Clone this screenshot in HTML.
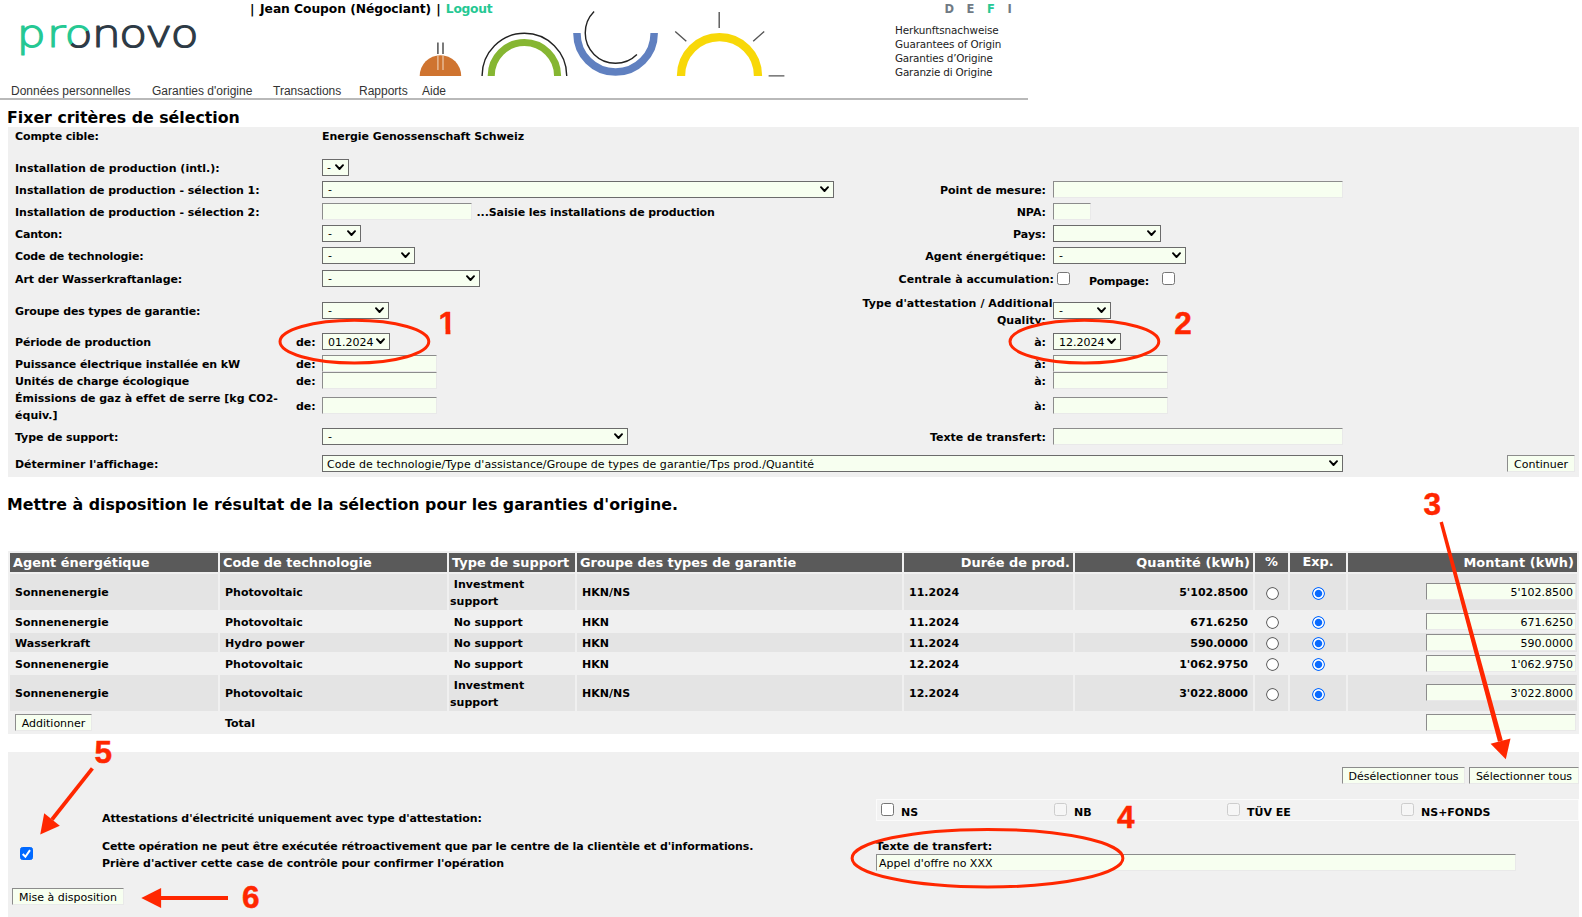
<!DOCTYPE html>
<html lang="fr"><head><meta charset="utf-8"><title>Pronovo</title>
<style>
*{box-sizing:border-box;margin:0;padding:0}
html,body{width:1582px;height:917px;overflow:hidden;background:#fff}
body{position:relative;font-family:"DejaVu Sans","Liberation Sans",sans-serif;font-size:11px;color:#000}
.a{position:absolute;white-space:nowrap;line-height:14px}
.b{font-weight:bold}
.r{text-align:right}
.sel{position:absolute;height:17px;border:1px solid #6b6b6b;background:#f7fff0;font-size:11px;line-height:15px;padding-top:1px;padding-left:5px;white-space:nowrap;overflow:hidden}
.sel svg{position:absolute;right:3.6px;top:4px;width:9px;height:7px}
.inp{position:absolute;height:17px;background:#f7fff0;border:1px solid;border-color:#8c8c8c #e9e9e9 #e9e9e9 #8c8c8c;font-size:11px;line-height:15px;padding-top:1px;white-space:nowrap;overflow:hidden}
.btn{position:absolute;height:17px;background:#f7fff0;border:1px solid;border-color:#8c8c8c #e9e9e9 #e9e9e9 #8c8c8c;font-size:11px;line-height:15px;padding-top:1px;text-align:center;white-space:nowrap}
.cb{position:absolute;width:13px;height:13px;border:1px solid #767676;border-radius:2.5px;background:#fff}
.cb.d{border-color:#cdcdcd;background:#f6f6f6}
.rad{position:absolute;width:13px;height:13px;border-radius:50%;background:radial-gradient(circle at 50% 50%,#fff 0,#fff 4.9px,#666 5.7px,#666 6.1px,rgba(102,102,102,0) 6.9px)}
.rad.on{background:radial-gradient(circle at 50% 50%,#0a6bff 0,#0a6bff 3.2px,#fff 4.2px,#fff 4.9px,#0a6bff 5.6px,#0a6bff 6.1px,rgba(10,107,255,0) 6.9px)}
.menu{font-family:"Liberation Sans",sans-serif;font-size:12px;color:#333}
.cell{position:absolute}
.red{font-family:"Liberation Sans",sans-serif;font-weight:bold;font-size:29px;color:#ff2700;line-height:30px;-webkit-text-stroke:0.5px #ff2700}
</style></head>
<body>
<svg class="cell" style="left:0;top:0" width="260" height="70" viewBox="0 0 260 70"><defs><linearGradient id="lg" gradientUnits="userSpaceOnUse" x1="57.3" y1="24" x2="81.3" y2="48"><stop offset="0.5" stop-color="#25c893"/><stop offset="0.5" stop-color="#2d3a45"/></linearGradient></defs><text transform="scale(1.17,1)" x="14.16 39.89 55.18 78.35 101.76 123.88 145.69" y="47.2" font-family="DejaVu Sans Light, DejaVu Sans, sans-serif" font-weight="200" font-size="39.5" fill="#2d3a45" stroke="#2d3a45" stroke-width="1.2" stroke-linejoin="round"><tspan fill="#25c893" stroke="#25c893">pr</tspan><tspan fill="url(#lg)" stroke="url(#lg)">o</tspan>novo</text></svg>
<div class="a b" style="left:250px;top:1px;font-size:12.3px;line-height:16px">| <span style="margin-left:1.3px;letter-spacing:-0.057px">Jean Coupon (Négociant)</span><span style="margin-left:0.8px"> |</span> <span style="color:#25c893;margin-left:0.9px;letter-spacing:-0.27px">Logout</span></div>
<div class="a b" style="left:944.6px;top:1px;font-size:11.5px;color:#707a84;line-height:16px">D</div>
<div class="a b" style="left:966.6px;top:1px;font-size:11.5px;color:#707a84;line-height:16px">E</div>
<div class="a b" style="left:987px;top:1px;font-size:11.5px;color:#25c893;line-height:16px">F</div>
<div class="a b" style="left:1007.6px;top:1px;font-size:11.5px;color:#707a84;line-height:16px">I</div>
<div class="a " style="left:895px;top:23px;font-size:10.4px;color:#222;letter-spacing:-0.081px;">Herkunftsnachweise</div>
<div class="a " style="left:895px;top:37px;font-size:10.4px;color:#222;letter-spacing:-0.117px;">Guarantees of Origin</div>
<div class="a " style="left:895px;top:51px;font-size:10.4px;color:#222;letter-spacing:-0.196px;">Garanties d’Origine</div>
<div class="a " style="left:895px;top:65px;font-size:10.4px;color:#222;letter-spacing:-0.156px;">Garanzie di Origine</div>
<svg class="cell" style="left:410px;top:0" width="390" height="90" viewBox="410 0 390 90">
<path d="M419.7 76 A20.75 20.75 0 0 1 461.2 76 Z" fill="#cf7430"/>
<path d="M437.9 42.5 V54 M443 42.5 V54" stroke="#444" stroke-width="1.4" fill="none"/>
<path d="M437.9 55.5 V70 M443 55.5 V70" stroke="#ecc3a3" stroke-width="1.3" fill="none"/>
<path d="M482.1 76 V75.6 A42.3 42.3 0 0 1 566.7 75.6 V76" fill="none" stroke="#222" stroke-width="1.4"/>
<path d="M491.25 76 V75.6 A33.15 33.15 0 0 1 557.55 75.6 V76" fill="none" stroke="#86b632" stroke-width="7.1"/>
<path d="M576.95 32.9 V33.5 A38.6 38.6 0 0 0 654.15 33.5 V32.9" fill="none" stroke="#6080c0" stroke-width="7.5"/>
<path d="M594.1 11.6 A30.3 30.3 0 0 0 594.1 54.4 A30.3 30.3 0 0 0 636.9 54.4" fill="none" stroke="#222" stroke-width="1.4"/>
<path d="M681.05 76 V75.5 A38.45 38.45 0 0 1 757.95 75.5 V76" fill="none" stroke="#f8d808" stroke-width="8.3"/>
<path d="M719.2 12 V28 M675.2 31.5 L686.3 41.2 M764.2 31.5 L753.2 41.2 M768.6 75.9 H784.4" stroke="#555" stroke-width="1.4" fill="none"/>
</svg>
<div class="a menu" style="left:11px;top:84px;">Données personnelles</div>
<div class="a menu" style="left:152px;top:84px;">Garanties d'origine</div>
<div class="a menu" style="left:273px;top:84px;">Transactions</div>
<div class="a menu" style="left:359px;top:84px;">Rapports</div>
<div class="a menu" style="left:422px;top:84px;">Aide</div>
<div class="cell" style="left:0px;top:98px;width:1028px;height:2px;background:#b9b9b9;"></div>
<div class="a b" style="left:7px;top:108px;font-size:15.8px;line-height:20px">Fixer critères de sélection</div>
<div class="cell" style="left:8px;top:127px;width:1571px;height:350px;background:#f0f0f0;"></div>
<div class="a b" style="left:15px;top:130px;;letter-spacing:-0.116px;">Compte cible:</div>
<div class="a b" style="left:322px;top:130px;;letter-spacing:-0.057px;">Energie Genossenschaft Schweiz</div>
<div class="a b" style="left:15px;top:162px;;letter-spacing:0.019px;">Installation de production (intl.):</div>
<div class="sel" style="left:322px;top:159px;width:27px;padding-left:4px"><span style="position:relative;top:-1px">-</span><svg viewBox="0 0 9 7"><path d="M1 1.2 L4.5 5 L8 1.2" fill="none" stroke="#000" stroke-width="1.9" stroke-linecap="round" stroke-linejoin="round"/></svg></div>
<div class="a b" style="left:15px;top:184px;;letter-spacing:-0.017px;">Installation de production - sélection 1:</div>
<div class="sel" style="left:322px;top:181px;width:512px;"><span style="position:relative;top:-1px">-</span><svg viewBox="0 0 9 7"><path d="M1 1.2 L4.5 5 L8 1.2" fill="none" stroke="#000" stroke-width="1.9" stroke-linecap="round" stroke-linejoin="round"/></svg></div>
<div class="a r b" style="right:536px;top:184px;">Point de mesure:</div>
<div class="inp" style="left:1053px;top:181px;width:290px;"></div>
<div class="a b" style="left:15px;top:206px;;letter-spacing:-0.017px;">Installation de production - sélection 2:</div>
<div class="inp" style="left:322px;top:203px;width:150px;"></div>
<div class="a b" style="left:476.5px;top:206px;;letter-spacing:-0.093px;">...Saisie les installations de production</div>
<div class="a r b" style="right:536px;top:206px;">NPA:</div>
<div class="inp" style="left:1053px;top:203px;width:38px;"></div>
<div class="a b" style="left:15px;top:228px;;letter-spacing:-0.154px;">Canton:</div>
<div class="sel" style="left:322px;top:225px;width:39px;"><span style="position:relative;top:-1px">-</span><svg viewBox="0 0 9 7"><path d="M1 1.2 L4.5 5 L8 1.2" fill="none" stroke="#000" stroke-width="1.9" stroke-linecap="round" stroke-linejoin="round"/></svg></div>
<div class="a r b" style="right:536px;top:228px;">Pays:</div>
<div class="sel" style="left:1053px;top:225px;width:108px;"><svg viewBox="0 0 9 7"><path d="M1 1.2 L4.5 5 L8 1.2" fill="none" stroke="#000" stroke-width="1.9" stroke-linecap="round" stroke-linejoin="round"/></svg></div>
<div class="a b" style="left:15px;top:250px;;letter-spacing:-0.133px;">Code de technologie:</div>
<div class="sel" style="left:322px;top:247px;width:93px;"><span style="position:relative;top:-1px">-</span><svg viewBox="0 0 9 7"><path d="M1 1.2 L4.5 5 L8 1.2" fill="none" stroke="#000" stroke-width="1.9" stroke-linecap="round" stroke-linejoin="round"/></svg></div>
<div class="a r b" style="right:536px;top:250px;">Agent énergétique:</div>
<div class="sel" style="left:1053px;top:247px;width:133px;"><span style="position:relative;top:-1px">-</span><svg viewBox="0 0 9 7"><path d="M1 1.2 L4.5 5 L8 1.2" fill="none" stroke="#000" stroke-width="1.9" stroke-linecap="round" stroke-linejoin="round"/></svg></div>
<div class="a b" style="left:15px;top:273px;;letter-spacing:-0.075px;">Art der Wasserkraftanlage:</div>
<div class="sel" style="left:322px;top:270px;width:158px;"><span style="position:relative;top:-1px">-</span><svg viewBox="0 0 9 7"><path d="M1 1.2 L4.5 5 L8 1.2" fill="none" stroke="#000" stroke-width="1.9" stroke-linecap="round" stroke-linejoin="round"/></svg></div>
<div class="a r b" style="right:528px;top:273px;">Centrale à accumulation:</div>
<div class="cb " style="left:1057px;top:272px"></div>
<div class="a b" style="left:1089px;top:275px;;letter-spacing:-0.278px;">Pompage:</div>
<div class="cb " style="left:1162px;top:272px"></div>
<div class="a b" style="left:15px;top:305px;;letter-spacing:-0.124px;">Groupe des types de garantie:</div>
<div class="sel" style="left:322px;top:302px;width:67px;"><span style="position:relative;top:-1px">-</span><svg viewBox="0 0 9 7"><path d="M1 1.2 L4.5 5 L8 1.2" fill="none" stroke="#000" stroke-width="1.9" stroke-linecap="round" stroke-linejoin="round"/></svg></div>
<div class="a r b" style="right:529.4000000000001px;top:297px;;letter-spacing:0.06px;">Type d'attestation / Additional</div>
<div class="a r b" style="right:536px;top:314px;">Quality:</div>
<div class="sel" style="left:1053px;top:302px;width:58px;"><span style="position:relative;top:-1px">-</span><svg viewBox="0 0 9 7"><path d="M1 1.2 L4.5 5 L8 1.2" fill="none" stroke="#000" stroke-width="1.9" stroke-linecap="round" stroke-linejoin="round"/></svg></div>
<div class="a b" style="left:15px;top:336px;;letter-spacing:-0.105px;">Période de production</div>
<div class="a b" style="left:296px;top:336px;">de:</div>
<div class="sel" style="left:322px;top:333px;width:68px;">01.2024<svg viewBox="0 0 9 7"><path d="M1 1.2 L4.5 5 L8 1.2" fill="none" stroke="#000" stroke-width="1.9" stroke-linecap="round" stroke-linejoin="round"/></svg></div>
<div class="a r b" style="right:536px;top:336px;">à:</div>
<div class="sel" style="left:1053px;top:333px;width:68px;">12.2024<svg viewBox="0 0 9 7"><path d="M1 1.2 L4.5 5 L8 1.2" fill="none" stroke="#000" stroke-width="1.9" stroke-linecap="round" stroke-linejoin="round"/></svg></div>
<div class="a b" style="left:15px;top:358px;;letter-spacing:-0.086px;">Puissance électrique installée en kW</div>
<div class="a b" style="left:296px;top:358px;">de:</div>
<div class="inp" style="left:322px;top:355px;width:115px;"></div>
<div class="a r b" style="right:536px;top:358px;">à:</div>
<div class="inp" style="left:1053px;top:355px;width:115px;"></div>
<div class="a b" style="left:15px;top:375px;;letter-spacing:-0.102px;">Unités de charge écologique</div>
<div class="a b" style="left:296px;top:375px;">de:</div>
<div class="inp" style="left:322px;top:372px;width:115px;"></div>
<div class="a r b" style="right:536px;top:375px;">à:</div>
<div class="inp" style="left:1053px;top:372px;width:115px;"></div>
<div class="a b" style="left:15px;top:390px;line-height:17px;letter-spacing:-0.025px;">Émissions de gaz à effet de serre [kg CO2-</div>
<div class="a b" style="left:15px;top:407px;line-height:17px;letter-spacing:0.025px;">équiv.]</div>
<div class="a b" style="left:296px;top:400px;">de:</div>
<div class="inp" style="left:322px;top:397px;width:115px;"></div>
<div class="a r b" style="right:536px;top:400px;">à:</div>
<div class="inp" style="left:1053px;top:397px;width:115px;"></div>
<div class="a b" style="left:15px;top:431px;;letter-spacing:-0.079px;">Type de support:</div>
<div class="sel" style="left:322px;top:428px;width:306px;"><span style="position:relative;top:-1px">-</span><svg viewBox="0 0 9 7"><path d="M1 1.2 L4.5 5 L8 1.2" fill="none" stroke="#000" stroke-width="1.9" stroke-linecap="round" stroke-linejoin="round"/></svg></div>
<div class="a r b" style="right:536px;top:431px;">Texte de transfert:</div>
<div class="inp" style="left:1053px;top:428px;width:290px;"></div>
<div class="a b" style="left:15px;top:458px;;letter-spacing:-0.024px;">Déterminer l'affichage:</div>
<div class="sel" style="left:322px;top:455px;width:1021px;padding-left:4px;letter-spacing:0.061px">Code de technologie/Type d'assistance/Groupe de types de garantie/Tps prod./Quantité<svg viewBox="0 0 9 7"><path d="M1 1.2 L4.5 5 L8 1.2" fill="none" stroke="#000" stroke-width="1.9" stroke-linecap="round" stroke-linejoin="round"/></svg></div>
<div class="btn" style="left:1507px;top:455px;width:68px;">Continuer</div>
<div class="a b" style="left:7px;top:495px;font-size:15.8px;line-height:20px">Mettre à disposition le résultat de la sélection pour les garanties d'origine.</div>
<div class="cell" style="left:8px;top:551px;width:1571px;height:183px;background:#f0f0f0;"></div>
<div class="cell" style="left:10px;top:553px;width:208px;height:19px;background:#5a5a5a;"></div>
<div class="cell" style="left:220px;top:553px;width:227px;height:19px;background:#5a5a5a;"></div>
<div class="cell" style="left:449px;top:553px;width:126px;height:19px;background:#5a5a5a;"></div>
<div class="cell" style="left:577px;top:553px;width:325px;height:19px;background:#5a5a5a;"></div>
<div class="cell" style="left:904px;top:553px;width:169px;height:19px;background:#5a5a5a;"></div>
<div class="cell" style="left:1075px;top:553px;width:178px;height:19px;background:#5a5a5a;"></div>
<div class="cell" style="left:1255px;top:553px;width:33px;height:19px;background:#5a5a5a;"></div>
<div class="cell" style="left:1290px;top:553px;width:56px;height:19px;background:#5a5a5a;"></div>
<div class="cell" style="left:1348px;top:553px;width:229px;height:19px;background:#5a5a5a;"></div>
<div class="cell" style="left:10px;top:574px;width:208px;height:36px;background:#e4e4e4;"></div>
<div class="cell" style="left:220px;top:574px;width:227px;height:36px;background:#e4e4e4;"></div>
<div class="cell" style="left:449px;top:574px;width:126px;height:36px;background:#e4e4e4;"></div>
<div class="cell" style="left:577px;top:574px;width:325px;height:36px;background:#e4e4e4;"></div>
<div class="cell" style="left:904px;top:574px;width:169px;height:36px;background:#e4e4e4;"></div>
<div class="cell" style="left:1075px;top:574px;width:178px;height:36px;background:#e4e4e4;"></div>
<div class="cell" style="left:1255px;top:574px;width:33px;height:36px;background:#e4e4e4;"></div>
<div class="cell" style="left:1290px;top:574px;width:56px;height:36px;background:#e4e4e4;"></div>
<div class="cell" style="left:1348px;top:574px;width:229px;height:36px;background:#e4e4e4;"></div>
<div class="cell" style="left:10px;top:633px;width:208px;height:19px;background:#e4e4e4;"></div>
<div class="cell" style="left:220px;top:633px;width:227px;height:19px;background:#e4e4e4;"></div>
<div class="cell" style="left:449px;top:633px;width:126px;height:19px;background:#e4e4e4;"></div>
<div class="cell" style="left:577px;top:633px;width:325px;height:19px;background:#e4e4e4;"></div>
<div class="cell" style="left:904px;top:633px;width:169px;height:19px;background:#e4e4e4;"></div>
<div class="cell" style="left:1075px;top:633px;width:178px;height:19px;background:#e4e4e4;"></div>
<div class="cell" style="left:1255px;top:633px;width:33px;height:19px;background:#e4e4e4;"></div>
<div class="cell" style="left:1290px;top:633px;width:56px;height:19px;background:#e4e4e4;"></div>
<div class="cell" style="left:1348px;top:633px;width:229px;height:19px;background:#e4e4e4;"></div>
<div class="cell" style="left:10px;top:675px;width:208px;height:36px;background:#e4e4e4;"></div>
<div class="cell" style="left:220px;top:675px;width:227px;height:36px;background:#e4e4e4;"></div>
<div class="cell" style="left:449px;top:675px;width:126px;height:36px;background:#e4e4e4;"></div>
<div class="cell" style="left:577px;top:675px;width:325px;height:36px;background:#e4e4e4;"></div>
<div class="cell" style="left:904px;top:675px;width:169px;height:36px;background:#e4e4e4;"></div>
<div class="cell" style="left:1075px;top:675px;width:178px;height:36px;background:#e4e4e4;"></div>
<div class="cell" style="left:1255px;top:675px;width:33px;height:36px;background:#e4e4e4;"></div>
<div class="cell" style="left:1290px;top:675px;width:56px;height:36px;background:#e4e4e4;"></div>
<div class="cell" style="left:1348px;top:675px;width:229px;height:36px;background:#e4e4e4;"></div>
<div class="a b" style="left:13px;top:554px;font-size:12.9px;color:#fff;line-height:18px">Agent énergétique</div>
<div class="a b" style="left:223px;top:554px;font-size:12.9px;color:#fff;line-height:18px">Code de technologie</div>
<div class="a b" style="left:452px;top:554px;font-size:12.9px;color:#fff;line-height:18px">Type de support</div>
<div class="a b" style="left:580px;top:554px;font-size:12.9px;color:#fff;line-height:18px">Groupe des types de garantie</div>
<div class="a r b" style="right:512px;top:554px;font-size:12.9px;color:#fff;line-height:18px">Durée de prod.</div>
<div class="a r b" style="right:332px;top:554px;font-size:12.9px;color:#fff;line-height:18px;letter-spacing:0.146px;">Quantité (kWh)</div>
<div class="a b" style="left:1255px;width:33px;text-align:center;top:553px;font-size:12.9px;color:#fff;line-height:18px">%</div>
<div class="a b" style="left:1290px;width:56px;text-align:center;top:553px;font-size:12.9px;color:#fff;line-height:18px">Exp.</div>
<div class="a r b" style="right:8px;top:554px;font-size:12.9px;color:#fff;line-height:18px;letter-spacing:0.099px;">Montant (kWh)</div>
<div class="a b" style="left:15px;top:586px;">Sonnenenergie</div>
<div class="a b" style="left:225px;top:586px;">Photovoltaic</div>
<div class="a b" style="left:450px;top:576px;line-height:17px">&nbsp;Investment<br>support</div>
<div class="a b" style="left:582px;top:586px;">HKN/NS</div>
<div class="a b" style="left:909px;top:586px;">11.2024</div>
<div class="a r b" style="right:334px;top:586px;">5'102.8500</div>
<div class="rad" style="left:1266px;top:587px"></div>
<div class="rad on" style="left:1312px;top:587px"></div>
<div class="inp" style="left:1426px;top:583px;width:150px;text-align:right;padding-right:2px">5'102.8500</div>
<div class="a b" style="left:15px;top:616px;">Sonnenenergie</div>
<div class="a b" style="left:225px;top:616px;">Photovoltaic</div>
<div class="a b" style="left:450px;top:616px;">&nbsp;No support</div>
<div class="a b" style="left:582px;top:616px;">HKN</div>
<div class="a b" style="left:909px;top:616px;">11.2024</div>
<div class="a r b" style="right:334px;top:616px;">671.6250</div>
<div class="rad" style="left:1266px;top:616px"></div>
<div class="rad on" style="left:1312px;top:616px"></div>
<div class="inp" style="left:1426px;top:613px;width:150px;text-align:right;padding-right:2px">671.6250</div>
<div class="a b" style="left:15px;top:637px;">Wasserkraft</div>
<div class="a b" style="left:225px;top:637px;">Hydro power</div>
<div class="a b" style="left:450px;top:637px;">&nbsp;No support</div>
<div class="a b" style="left:582px;top:637px;">HKN</div>
<div class="a b" style="left:909px;top:637px;">11.2024</div>
<div class="a r b" style="right:334px;top:637px;">590.0000</div>
<div class="rad" style="left:1266px;top:637px"></div>
<div class="rad on" style="left:1312px;top:637px"></div>
<div class="inp" style="left:1426px;top:634px;width:150px;text-align:right;padding-right:2px">590.0000</div>
<div class="a b" style="left:15px;top:658px;">Sonnenenergie</div>
<div class="a b" style="left:225px;top:658px;">Photovoltaic</div>
<div class="a b" style="left:450px;top:658px;">&nbsp;No support</div>
<div class="a b" style="left:582px;top:658px;">HKN</div>
<div class="a b" style="left:909px;top:658px;">12.2024</div>
<div class="a r b" style="right:334px;top:658px;">1'062.9750</div>
<div class="rad" style="left:1266px;top:658px"></div>
<div class="rad on" style="left:1312px;top:658px"></div>
<div class="inp" style="left:1426px;top:655px;width:150px;text-align:right;padding-right:2px">1'062.9750</div>
<div class="a b" style="left:15px;top:687px;">Sonnenenergie</div>
<div class="a b" style="left:225px;top:687px;">Photovoltaic</div>
<div class="a b" style="left:450px;top:677px;line-height:17px">&nbsp;Investment<br>support</div>
<div class="a b" style="left:582px;top:687px;">HKN/NS</div>
<div class="a b" style="left:909px;top:687px;">12.2024</div>
<div class="a r b" style="right:334px;top:687px;">3'022.8000</div>
<div class="rad" style="left:1266px;top:688px"></div>
<div class="rad on" style="left:1312px;top:688px"></div>
<div class="inp" style="left:1426px;top:684px;width:150px;text-align:right;padding-right:2px">3'022.8000</div>
<div class="btn" style="left:15px;top:714px;width:77px;">Additionner</div>
<div class="a b" style="left:225px;top:717px;">Total</div>
<div class="inp" style="left:1426px;top:714px;width:150px;"></div>
<div class="cell" style="left:8px;top:752px;width:1571px;height:165px;background:#f0f0f0;"></div>
<div class="btn" style="left:1342px;top:767px;width:123px;">Désélectionner tous</div>
<div class="btn" style="left:1469px;top:767px;width:110px;">Sélectionner tous</div>
<div class="cell" style="left:876px;top:799px;width:703px;height:22px;background:#f2f2f2;border:1px solid #fbfbfb"></div>
<div class="cb " style="left:881px;top:803px"></div>
<div class="a b" style="left:901px;top:806px;">NS</div>
<div class="cb d" style="left:1054px;top:803px"></div>
<div class="a b" style="left:1074px;top:806px;">NB</div>
<div class="cb d" style="left:1227px;top:803px"></div>
<div class="a b" style="left:1247px;top:806px;">TÜV EE</div>
<div class="cb d" style="left:1401px;top:803px"></div>
<div class="a b" style="left:1421px;top:806px;">NS+FONDS</div>
<div class="a b" style="left:102px;top:812px;;letter-spacing:-0.09px;">Attestations d'électricité uniquement avec type d'attestation:</div>
<div class="a b" style="left:102px;top:838px;line-height:17px;letter-spacing:-0.081px;">Cette opération ne peut être exécutée rétroactivement que par le centre de la clientèle et d'informations.</div>
<div class="a b" style="left:102px;top:855px;line-height:17px;letter-spacing:-0.051px;">Prière d'activer cette case de contrôle pour confirmer l'opération</div>
<div class="cb" style="left:20px;top:847px;background:#0069ff;border-color:#0069ff;border-radius:2.5px"><svg width="11" height="11" viewBox="0 0 11 11" style="position:absolute;left:0;top:0;overflow:visible"><path d="M1.7 6.0 L4.4 8.7 L9.0 2.1" fill="none" stroke="#fff" stroke-width="2"/></svg></div>
<div class="a b" style="left:876px;top:840px;">Texte de transfert:</div>
<div class="inp" style="left:876px;top:854px;width:640px;padding-left:2px">Appel d'offre no XXX</div>
<div class="btn" style="left:12px;top:888px;width:112px;">Mise à disposition</div>
<svg class="cell" style="left:0;top:0;pointer-events:none" width="1582" height="917" viewBox="0 0 1582 917">
<g fill="none" stroke="#ff2700" stroke-width="3">
<ellipse cx="354.4" cy="341.6" rx="74.4" ry="21.4"/>
<ellipse cx="1084.4" cy="341.6" rx="74.4" ry="21.4"/>
<ellipse cx="987.5" cy="858.2" rx="135.4" ry="28.8"/>
<path d="M92.4 768.4 L52 819.5" stroke-width="3.8"/>
<path d="M228 898 L160 898" stroke-width="3.8"/>
</g>
<g fill="#ff2700">
<path d="M1442.84 521.56 L1439.56 522.44 L1497.99 741.85 L1502.81 740.55 Z"/>
<path d="M1505.8 759.3 L1490.6 743.8 L1510.5 738.4 Z"/>
<path d="M40.2 834.4 L44.2 813.3 L59.8 825.7 Z"/>
<path d="M141.3 898 L161.1 887.9 L161.1 908.1 Z"/>
</g>
</svg>
<div class="a red" style="left:438.5px;top:307.6px;font-size:31.5px;clip-path:polygon(0 0,11.9px 0,11.9px 30px,7px 30px,7px 22px,0 22px)">1</div>
<div class="a red" style="left:1174.3px;top:308px;font-size:31.5px">2</div>
<div class="a red" style="left:1423.5px;top:489.2px;font-size:31.5px">3</div>
<div class="a red" style="left:1117px;top:802px;font-size:31.5px">4</div>
<div class="a red" style="left:94.5px;top:737px;font-size:31.5px">5</div>
<div class="a red" style="left:242px;top:882px;font-size:31.5px">6</div>
</body></html>
